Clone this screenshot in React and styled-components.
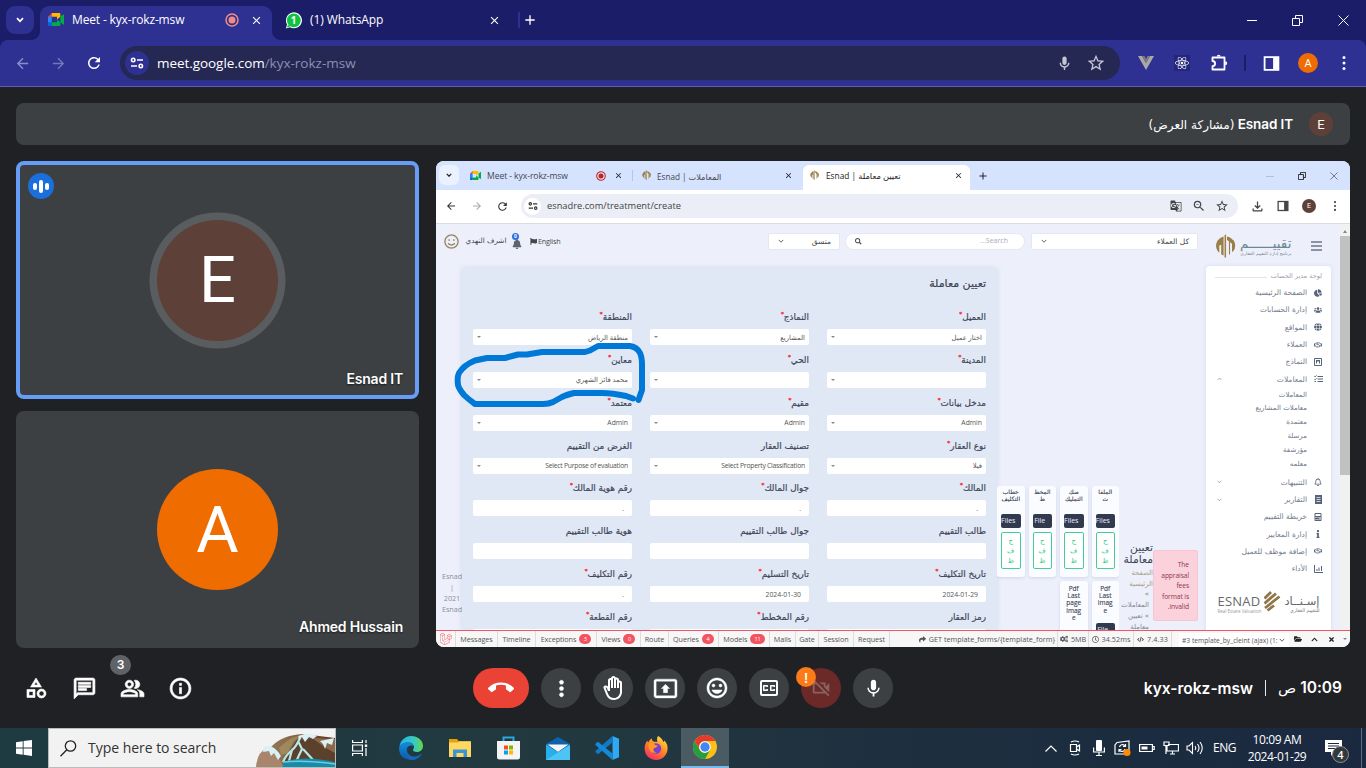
import React from "react";
import styled, { createGlobalStyle } from "styled-components";
import {
  MdCallEnd, MdMoreVert, MdOutlineBackHand, MdOutlinePresentToAll, MdOutlineMood, MdOutlineClosedCaptionOff,
  MdOutlineVideocamOff, MdMic, MdOutlineInfo, MdOutlineCategory, MdOutlineChat, MdOutlinePeopleAlt,
  MdOutlineMic, MdStarOutline, MdArrowBack, MdArrowForward, MdRefresh, MdClose, MdAdd,
  MdGTranslate, MdZoomOut, MdOutlineFileDownload,
} from "react-icons/md";
import {
  FaReact, FaBell, FaFlag, FaSearch, FaChartPie, FaUsers, FaGlobe, FaListUl, FaCalculator, FaInfo,
  FaRegBell, FaShare, FaCogs, FaRegClock, FaCode, FaFolderOpen, FaChevronUp, FaTimes, FaRegHandshake,
  FaRegSmile, FaLaravel,
} from "react-icons/fa";

const Global = createGlobalStyle`
  * { box-sizing: border-box; }
  body { margin: 0; background: #202124; font-family: "Open Sans", "DejaVu Sans", sans-serif; overflow: hidden; }
  svg { display: block; flex: none; }
`;

const Screen = styled.div`
  width: 1366px; height: 768px; display: flex; flex-direction: column; overflow: hidden; background: #202124;
`;
const Slot = styled.div`
  width: ${p => p.$w}px; flex: none; display: flex; align-items: center;
  justify-content: ${p => p.$j || "center"}; height: 100%; padding-top: ${p => p.$pt || 0}px;
`;
const Text = styled.span`
  font-size: ${p => p.$s || 12}px; color: ${p => p.$c || "inherit"}; font-weight: ${p => p.$b || 400};
  letter-spacing: ${p => p.$ls || 0}px; white-space: nowrap; line-height: 1.2;
  font-family: ${p => p.$f || "inherit"}; ${p => p.$rtl && "direction: rtl;"}
`;
const Divider = styled.i`
  width: ${p => p.$w || 1}px; height: ${p => p.$h}px; background: ${p => p.$c}; flex: none;
`;
const Spacer = styled.div`flex: 1;`;

/* ---------- browser window ---------- */
const TabStrip = styled.div`
  height: 40px; display: flex; background: #1b1d69; color: #fff; flex: none;
`;
const TabMenu = styled.div`
  width: 28px; height: 28px; margin: 6px 6px 6px 6px; border-radius: 9px; background: #2e3192;
  display: flex; align-items: center; justify-content: center;
`;
const ActiveTab = styled.div`
  width: 232px; height: 34px; margin-top: 6px; display: flex; background: #2e3192; border-radius: 9px 9px 0 0;
  padding-bottom: 6px; position: relative;
  &::before, &::after {
    content: ""; position: absolute; bottom: 0; width: 8px; height: 8px;
  }
  &::before { left: -8px; background: radial-gradient(circle at 0 0, transparent 7.500px, #2e3192 8px); }
  &::after { right: -8px; background: radial-gradient(circle at 100% 0, transparent 7.500px, #2e3192 8px); }
`;
const IdleTab = styled.div`
  width: 246px; height: 40px; display: flex;
`;
const ToolbarShell = styled.div`background: #1b1d69; flex: none;`;
const Toolbar = styled.div`
  height: 47px; display: flex; align-items: center; background: #2e3192; color: #fff; flex: none;
  border-bottom: 1px solid #5d60b5; border-radius: 8px 8px 0 0;
`;
const Omnibox = styled.div`
  width: 1000px; height: 34px; border-radius: 17px; background: #252853; display: flex; align-items: center; flex: none;
`;
const SiteInfo = styled.div`
  width: ${p => p.$d}px; height: ${p => p.$d}px; border-radius: 50%; background: ${p => p.$bg}; margin-left: ${p => p.$m}px;
  display: flex; align-items: center; justify-content: center; flex: none;
`;
const Round = styled.div`
  width: ${p => p.$d}px; height: ${p => p.$d}px; border-radius: 50%; background: ${p => p.$bg}; color: #fff;
  display: flex; align-items: center; justify-content: center; font: ${p => p.$b || 400} ${p => p.$s}px Roboto, sans-serif; flex: none;
  ${p => p.$ring && `box-shadow: 0 0 0 ${p.$ring}px #5a5d60;`}
`;

const MeetLogo = ({ w = 16 }) => (
  <svg width={w} height={w * 0.82} viewBox="0 0 88 72">
    <path d="M0 51v15c0 3.500 2.700 6 6 6h15l3.200-11.300L21 51l-10.300-3.200z" fill="#0066da" />
    <path d="M21 0 0 21l10.800 3.200L21 21l3-10z" fill="#e94235" />
    <path d="M0 21h21v30H0z" fill="#2684fc" />
    <path d="M83 8.500 68 21v30l15 12.300c2 1.700 5 .2 5-2.400V11c0-2.700-3-4.200-5-2.500z" fill="#00ac47" />
    <path d="M49.500 36v15H21v21h41c3.500 0 6-2.600 6-6V51z" fill="#00ac47" />
    <path d="M62 0H21v21h28.500v15L68 21V6c0-3.400-2.500-6-6-6z" fill="#ffba00" />
  </svg>
);
const Record = ({ s, c }) => (
  <svg width={s} height={s} viewBox="0 0 14 14" fill="none" stroke={c} strokeWidth="1.500">
    <circle cx="7" cy="7" r="6" /><circle cx="7" cy="7" r="3.500" fill={c} stroke="none" />
  </svg>
);
const Chevron = ({ w = 8, sw = 1.8, up, c = "currentColor" }) => (
  <svg width={w} height={w * 0.75} viewBox="0 0 8 6" fill="none" stroke={c} strokeWidth={sw}>
    <path d={up ? "M1 4.800 4 1.700 7 4.800" : "M1 1.200 4 4.300 7 1.200"} />
  </svg>
);
const Tune = ({ s = 14, c = "currentColor" }) => (
  <svg width={s} height={s} viewBox="0 0 14 14" fill="none" stroke={c} strokeWidth="1.600">
    <circle cx="3.200" cy="4" r="1.700" /><path d="M7 4h6M1 10h6" /><circle cx="10.800" cy="10" r="1.700" />
  </svg>
);
const WhatsApp = () => (
  <svg width="17" height="17" viewBox="0 0 17 17">
    <path d="M1 16.500 2 12.300A8 8 0 1 1 5 15.300z" fill="#fff" />
    <circle cx="8.800" cy="8.300" r="6.900" fill="#10c143" /><path d="M2 15.500l.9-3 2.200 2.100z" fill="#10c143" />
    <text x="8.600" y="12" fontSize="10" fontWeight="700" fill="#fff" textAnchor="middle" fontFamily="Open Sans">1</text>
  </svg>
);
const Puzzle = () => (
  <svg width="18" height="18" viewBox="0 0 18 18" fill="none" stroke="#fff" strokeWidth="1.800" strokeLinejoin="round">
    <path d="M2.500 3.500H14.500V15.500H2.500V12.200A2.600 2.600 0 0 0 2.500 7z" />
    <path d="M6.800 2.600a1.900 1.900 0 0 1 3.800 0zM15.200 7.200a2 2 0 0 1 0 4z" fill="#fff" stroke="none" />
  </svg>
);
const SidePanel = ({ s, c }) => (
  <svg width={s} height={s} viewBox="0 0 16 16">
    <rect x="1.500" y="2" width="13" height="12" fill="none" stroke={c} strokeWidth="1.700" /><path d="M9.500 2h5v12h-5z" fill={c} />
  </svg>
);
const WinButton = ({ kind, s = 11, c = "#fff", sw = 1 }) => (
  <svg width={s} height={s} viewBox="0 0 11 11" fill="none" stroke={c} strokeWidth={sw}>
    {kind === "min" && <path d="M0.500 5.500h10" shapeRendering="crispEdges" />}
    {kind === "max" && <path d="M.5 3.500h7v7h-7zM3.500 3V.5h7v7H8" />}
    {kind === "close" && <path d="M.5.5l10 10M10.500.5l-10 10" />}
  </svg>
);
const Kebab = ({ c, h = 14, r = 1.500 }) => (
  <svg width="4" height={h} viewBox={`0 0 4 ${h}`} fill={c}>
    <circle cx="2" cy={r} r={r} /><circle cx="2" cy={h / 2} r={r} /><circle cx="2" cy={h - r} r={r} />
  </svg>
);

const Browser = () => (
  <>
    <TabStrip>
      <TabMenu><Chevron /></TabMenu>
      <ActiveTab>
        <Slot $w={32}><MeetLogo /></Slot>
        <Slot $w={147} $j="flex-start" $pt={1}><Text $s={12} $ls={-0.15}>Meet - kyx-rokz-msw</Text></Slot>
        <Slot $w={26}><Record s={14} c="#f28b82" /></Slot>
        <Slot $w={22}><MdClose size={13} /></Slot>
      </ActiveTab>
      <IdleTab>
        <Slot $w={5} />
        <Slot $w={33}><WhatsApp /></Slot>
        <Slot $w={173} $j="flex-start" $pt={1}><Text $s={12} $ls={-0.1}>(1) WhatsApp</Text></Slot>
        <Slot $w={22}><MdClose size={13} /></Slot>
      </IdleTab>
      <Slot $w={2}><Divider $w={2} $h={16} $c="#2e3192" /></Slot>
      <Slot $w={20}><MdAdd size={16} /></Slot>
      <Spacer />
      <Slot $w={46}><WinButton kind="min" /></Slot>
      <Slot $w={46}><WinButton kind="max" /></Slot>
      <Slot $w={46}><WinButton kind="close" /></Slot>
    </TabStrip>
    <ToolbarShell>
      <Toolbar>
        <Slot $w={4} />
        <Slot $w={36}><MdArrowBack size={17} color="#8b8dca" /></Slot>
        <Slot $w={36}><MdArrowForward size={17} color="#7577bb" /></Slot>
        <Slot $w={36}><MdRefresh size={18} /></Slot>
        <Slot $w={8} />
        <Omnibox>
          <SiteInfo $d={24} $bg="#2e3192" $m={5}><Tune /></SiteInfo>
          <Slot $w={8} />
          <Text $s={13.500} $ls={-0.060}>meet.google.com<Text $s={13.500} $c="#8d8fb0">/kyx-rokz-msw</Text></Text>
          <Spacer />
          <Slot $w={32}><MdOutlineMic size={17} color="#c4c5d4" /></Slot>
          <Slot $w={32}><MdStarOutline size={20} color="#c4c5d4" /></Slot>
          <Slot $w={8} />
        </Omnibox>
        <Slot $w={8} />
        <Slot $w={36}>
          <svg width="16" height="14" viewBox="0 0 16 14"><path d="M0 0h4l4 7 4-7h4L8 14z" fill="#a9a9a9" /><path d="M4 0h2.500L8 3l1.500-3H12L8 7.200z" fill="#7c7c80" /></svg>
        </Slot>
        <Slot $w={36}><ReactBox><FaReact size={14} /></ReactBox></Slot>
        <Slot $w={37}><Puzzle /></Slot>
        <Slot $w={16}><Divider $w={2} $h={16} $c="#1b1d69" /></Slot>
        <Slot $w={37}><SidePanel s={17} c="#fff" /></Slot>
        <Slot $w={36}><Round $d={20} $bg="#ef6c00" $s={11}>A</Round></Slot>
        <Slot $w={36}><Kebab c="#fff" /></Slot>
      </Toolbar>
    </ToolbarShell>
  </>
);
const ReactBox = styled.div`
  width: 16px; height: 16px; background: #23267a; display: flex; align-items: center; justify-content: center;
`;

/* ---------- meeting ---------- */
const meetFont = 'Inter, "DejaVu Sans", sans-serif';
const Meeting = styled.main`
  height: 561px; padding: 16px 16px 0; flex: none; display: flex; flex-direction: column; gap: 16px; color: #fff;
`;
const PresenterBar = styled.div`
  height: 42px; flex: none; border-radius: 8px; background: #3c4043; display: flex; align-items: center;
  justify-content: flex-end; gap: 16px; padding-right: 17px;
`;
const Stage = styled.div`display: flex; gap: 17px; height: 487px;`;
const People = styled.div`width: 403px; display: flex; flex-direction: column; gap: 12px;`;
const Tile = styled.div`
  height: ${p => (p.$active ? 238 : 237)}px; background: #3c4043; border-radius: 8px; position: relative; display: flex;
  align-items: center; justify-content: center; ${p => p.$active && "border: 4px solid #669df6;"}
`;
const TileName = styled.div`
  position: absolute; right: ${p => p.$r}px; bottom: ${p => p.$bt}px; font: ${"600 14px"} ${meetFont}; line-height: 18px;
  letter-spacing: -.2px; text-shadow: 0 1px 2px rgba(0,0,0,.6);
`;
const Speaking = styled.div`
  position: absolute; left: 8px; top: 8px; width: 26px; height: 26px; border-radius: 50%; background: #1a6fdc;
  display: flex; align-items: center; justify-content: center; gap: 2px;
`;
const Wave = styled.i`width: 4px; height: ${p => p.$h}px; border-radius: 2px; background: #fff;`;

/* ---------- shared page ---------- */
const Shared = styled.section`
  width: 914px; height: 486px; background: #fff; border-radius: 8px; overflow: hidden; position: relative;
  color: #44474c; display: flex; flex-direction: column;
`;
const STabs = styled.div`height: 29px; background: #d5e3ff; display: flex; flex: none;`;
const STabMenu = styled.div`
  width: 20px; height: 20px; border-radius: 6px; background: #eaf1ff; margin: 4px; margin-left: 3px; color: #222;
  display: flex; align-items: center; justify-content: center;
`;
const SActive = styled.div`
  width: 167px; height: 25px; margin-top: 4px; background: #fff; border-radius: 6px 6px 0 0; display: flex; padding-bottom: 4px;
`;
const SToolbar = styled.div`
  height: 34px; display: flex; align-items: center; background: #fff; border-bottom: 1px solid #dcdcdc; flex: none;
  color: #444; padding-bottom: 1px;
`;
const SOmni = styled.div`
  width: 717px; height: 24px; background: #ebeef7; border-radius: 12px; display: flex; align-items: center;
`;
const Page = styled.div`
  height: 406px; display: flex; background: #edf0fb; flex: none;
`;
const PageMain = styled.div`width: 904px; height: 406px; overflow: hidden;`;
const Scrollbar = styled.div`
  width: 10px; background: #f1f1f1; display: flex; flex-direction: column; align-items: center; padding-top: 6px; gap: 3px;
`;
const ScrollUp = styled.i`
  width: 0; height: 0; border: 2px solid transparent; border-bottom: 3px solid #888; border-top: 0;
`;
const ScrollThumb = styled.div`width: 10px; height: 239px; background: #c1c1c1;`;
const PageHead = styled.header`height: 44px; display: flex; align-items: center; padding-bottom: 9px;`;
const Select = styled.div`
  width: ${p => p.$w}px; height: 17px; background: #fff; border: 1px solid #e4e7f0; border-radius: ${p => p.$r || 2}px;
  display: flex; align-items: center; justify-content: space-between; padding: 0 ${p => p.$pr || 8}px 0 9px; flex: none;
`;
const Bell = styled.div`width: 12px; height: 14px; position: relative; display: flex; align-items: flex-end;`;
const BellCount = styled.b`
  position: absolute; left: 0; top: -2px; width: 7px; height: 7px; border-radius: 50%; background: #2b72dc; color: #fff;
  font-size: 5px; line-height: 7px; text-align: center;
`;
const Logo = styled.div`display: flex; gap: 4px; align-items: center; width: 78px; padding-top: 9px; white-space: nowrap; flex: none;`;
const Menu = styled.div`
  display: flex; flex-direction: column; gap: 2px; padding-top: 8px;
`;
const MenuBar = styled.i`width: 11px; height: 2px; background: #8a94a4;`;
const Content = styled.div`display: flex; height: 362px; align-items: flex-start;`;
const FootNote = styled.div`
  width: 26px; padding: 303px 0 0 6px; font-size: 7.200px; line-height: 11px; color: #878e9c; text-align: center; white-space: nowrap;
  display: flex; flex-direction: column; align-items: center; flex: none;
`;
const Card = styled.div`
  width: 535px; height: 363px; background: #e1e8f5; padding: 8px 11px 0; direction: rtl; flex: none;
  box-shadow: 0 0 5px rgba(120,140,190,.22);
`;
const CardTitle = styled.h1`
  margin: 0; height: 34px; font: 400 11px/16px "DejaVu Sans"; color: #3c4356; -webkit-text-stroke: .2px;
`;
const FormGrid = styled.div`
  display: grid; grid-template-columns: repeat(3, 159px); column-gap: 18px; grid-auto-rows: 42.86px;
`;
const FieldLabel = styled.div`
  height: 19px; line-height: 15px; font-family: "DejaVu Sans"; font-size: 8.800px; color: #3f4759; white-space: nowrap;
  -webkit-text-stroke: .2px;
`;
const Star = styled.sup`color: #f22; font-size: 5.500px; line-height: 0; font-weight: 700; vertical-align: 4px;`;
const Input = styled.div`
  height: 16px; background: #fff; border-radius: 2px; display: flex; align-items: center; justify-content: space-between;
  padding: 0 ${p => p.$in || 4}px 0 4px; font-size: 6.800px; color: #555; font-family: "Open Sans", "DejaVu Sans";
  white-space: nowrap; letter-spacing: ${p => (p.$tight ? -0.250 : 0)}px;
`;
const Caret = styled.i`
  border: 2px solid transparent; border-top: 2px solid #888; border-bottom: 0; width: 0; height: 0;
`;

const fields = [
  ["العميل", 1, "اختار عميل", 1], ["النماذج", 1, "المشاريع", 1], ["المنطقة", 1, "منطقة الرياض", 1],
  ["المدينة", 1, "", 1], ["الحي", 1, "", 1], ["معاين", 1, "محمد فائز الشهري", 1],
  ["مدخل بيانات", 1, "Admin", 1], ["مقيم", 1, "Admin", 1], ["معتمد", 1, "Admin", 1],
  ["نوع العقار", 1, "فيلا", 1], ["تصنيف العقار", 0, "Select Property Classification", 1], ["الغرض من التقييم", 0, "Select Purpose of evaluation", 1],
  ["المالك", 1, ".", 0], ["جوال المالك", 1, ".", 0], ["رقم هوية المالك", 1, ".", 0],
  ["طالب التقييم", 0, "", 0], ["جوال طالب التقييم", 0, "", 0], ["هوية طالب التقييم", 0, "", 0],
  ["تاريخ التكليف", 1, "2024-01-29", 0], ["تاريخ التسليم", 1, "2024-01-30", 0], ["رقم التكليف", 1, ".", 0],
  ["رمز العقار", 0, "", 0], ["رقم المخطط", 1, "", 0], ["رقم القطعة", 1, "", 0],
];

const Uploads = styled.div`
  width: 122px; margin-top: 218px; direction: rtl; display: grid; grid-template-columns: repeat(4, 27.500px);
  column-gap: 4px; row-gap: 4px; height: 144px; overflow: hidden; flex: none;
`;
const UpCard = styled.div`
  background: #fbfcff; border-radius: 3px; height: 91px; padding: 3px 4px; text-align: center; overflow: hidden;
  box-shadow: 0 1px 3px rgba(90,110,160,.2);
`;
const UpTitle = styled.div`
  height: ${p => p.$h || 25}px; font: ${p => (p.$h ? 6.500 : 6)}px/7.200px "Open Sans", "DejaVu Sans"; color: #333b4d; white-space: pre-line;
  margin: 0 -3px; padding-top: ${p => (p.$h ? 1 : 0)}px; -webkit-text-stroke: .1px;
`;
const UpFile = styled.div`
  height: 14px; background: #313a4e; border-radius: 2px; color: #eef; font-size: 7px; line-height: 14px; overflow: hidden;
  direction: ltr; display: flex; justify-content: center; white-space: nowrap; padding-right: 5px;
`;
const UpSave = styled.div`
  margin-top: 4px; height: 37px; border: 1px solid #45cd96; border-radius: 2px; color: #37c98a;
  font: 7px/10px "DejaVu Sans"; padding-top: 3px; background: #fff;
`;
const Crumbs = styled.div`
  width: 34px; margin-top: 274px; height: 88px; overflow: hidden; direction: rtl; font: 6.900px/10.700px "DejaVu Sans"; color: #808894; flex: none;
`;
const CrumbTitle = styled.div`font-size: 10.800px; line-height: 12px; color: #3c4356; padding-bottom: 2px; white-space: pre-line;`;
const CrumbLine = styled.div`white-space: nowrap; padding-right: ${p => p.$p || 0}px; color: ${p => p.$c || "inherit"};`;
const Alert = styled.div`
  width: 45px; height: 71px; margin: 282px 8px 0 0; background: #fbd1dc; border: 1px solid #f8c6d2; border-radius: 2px;
  color: #8a3a4f; font-size: 6.700px; letter-spacing: -.1px; line-height: 10.500px; text-align: right; padding: 9px 8px 0 0; white-space: pre-line; flex: none;
`;
const Sidebar = styled.aside`
  width: 125px; height: 370px; margin-top: -2px; background: #fff; border-radius: 4px 4px 0 0; padding-top: 4px;
  box-shadow: 0 0 4px rgba(120,140,190,.2); color: #6c7686; flex: none;
`;
const SideHead = styled.div`
  height: 14px; display: flex; align-items: center; justify-content: space-between; padding: 0 9px; color: #9aa1ae;
`;
const SideItem = styled.div`
  height: ${p => (p.$sub ? 13.800 : 17.300)}px; margin-top: ${p => p.$mt || 0}px; display: flex; align-items: center; direction: rtl; padding: 0 6px 0 11px;
  font: ${p => (p.$sub ? 7 : 7.500)}px "DejaVu Sans"; color: ${p => (p.$sub ? "#6f7989" : "#727c8c")}; white-space: nowrap;
`;
const SideIcon = styled.div`width: 14px; margin-left: 4px; display: flex; justify-content: center; color: #56637a;`;
const EsnadBrand = styled.div`display: flex; align-items: center; justify-content: center; gap: 3px; margin-top: 8px; height: 34px;`;
const BrandCol = styled.div`
  display: flex; flex-direction: column; align-items: ${p => p.$a || "flex-start"}; padding-top: ${p => p.$pt || 0}px;
`;

const Tower = ({ s }) => (
  <svg width={s} height={s * 1.15} viewBox="0 0 22 25" fill="#9a8048">
    <path d="M9 2.500v19.800A10.200 10.200 0 0 1 6.500 21V11L4.500 12v7.500A10 10 0 0 1 9 2.500z" />
    <path d="M10 1.200 11.600 0v24.500H10zM12.600 2.400A10 10 0 0 1 17.800 19.300V10l-2-1.400v12.200l-1.200.7V7.500l-2-1.400z" />
    <path d="M18.900 5.500a10 10 0 0 1 0 12.800zM3.500 6a10 10 0 0 0 0 12.500z" />
  </svg>
);
const ChartIcon = () => (
  <svg width="9" height="8" viewBox="0 0 9 8" fill="none" stroke="currentColor"><path d="M.5 0v7.500H9M3 6V4M5 6V2.500M7.500 6V1" /></svg>
);
const FormIcon = () => (
  <svg width="8" height="8" viewBox="0 0 8 8" fill="none" stroke="currentColor"><path d="M.5.5h7v7h-7zM2 2.500h4M2.500 3v2.500M5.500 3v2.500M4 3v1" /></svg>
);
const ReportIcon = () => (
  <svg width="7" height="9" viewBox="0 0 7 9"><path d="M0 0h7v9H0z" fill="currentColor" /><path d="M1.500 2.500h4M1.500 4.500h4M1.500 6.500h4" stroke="#fff" strokeWidth=".7" /></svg>
);
const ChecksIcon = () => (
  <svg width="9" height="8" viewBox="0 0 9 8" fill="none" stroke="currentColor"><path d="M3.500 1.500H9M3.500 4H9M3.500 6.500H9M.3 1l.8.8L2.500.4M.3 4l.8.8 1.400-1.400M.5 6.500h1.500" /></svg>
);

const side = [
  ["الصفحة الرئيسية", FaChartPie], ["إدارة الحسابات", FaUsers], ["المواقع", FaGlobe], ["العملاء", FaRegHandshake],
  ["النماذج", FormIcon], ["المعاملات", ChecksIcon, "up"],
];
const sub = ["المعاملات", "معاملات المشاريع", "معتمدة", "مرسلة", "مؤرشفة", "معلمه"];
const side2 = [
  ["التنبيهات", FaRegBell, "down"], ["التقارير", ReportIcon, "down"], ["خريطة التقييم", FaCalculator],
  ["إدارة المعايير", FaInfo], ["إضافة موظف للعميل", FaRegHandshake], ["الأداء", ChartIcon],
];
const SideRow = ([t, I, ch], mt) => (
  <SideItem key={t} $mt={mt}>
    <SideIcon><I size={8} /></SideIcon>{t}<Spacer />{ch && <Chevron w={5} sw={1} up={ch === "up"} />}
  </SideItem>
);

const DebugBar = styled.footer`
  height: 17px; display: flex; align-items: flex-start; border-top: 1px solid #f4545f; background: #f7f7f7; color: #555;
  flex: none; width: 914px;
`;
const DItem = styled.div`
  width: ${p => p.$w}px; height: 16px; border-right: 1px solid #ddd; display: flex; align-items: center; justify-content: center;
  gap: 3px; font-size: 7.200px; white-space: nowrap; flex: none; letter-spacing: ${p => p.$ls || -0.050}px;
`;
const DBadge = styled.b`
  min-width: 12px; height: 10px; padding: 0 4px; border-radius: 5px; background: #f4545f; color: #fff; font-size: 5.500px; line-height: 10px;
  text-align: center; font-weight: 400;
`;
const debug = [["Messages", 42], ["Timeline", 38], ["Exceptions", 61, "3"], ["Views", 44, "0"], ["Route", 28], ["Queries", 50, "4"],
  ["Models", 51, "11"], ["Mails", 26], ["Gate", 23], ["Session", 35], ["Request", 36]];
const DSelect = styled.div`
  width: 110px; height: 14px; margin-top: 2px; background: #fff; display: flex; align-items: center; justify-content: space-between; padding: 1px 4px 0 3px;
  font-size: 6.700px; margin-left: 7px; white-space: nowrap; flex: none;
`;
const DTool = styled.div`width: ${p => p.$w}px; height: 16px; display: flex; align-items: center; justify-content: center; flex: none;`;
const Scribble = styled.svg`position: absolute; left: 0; top: 0; pointer-events: none;`;

const up = (t, f, h) => (
  <UpCard key={t}><UpTitle $h={h}>{t}</UpTitle>{f && <UpFile>{f}</UpFile>}{!h && <UpSave>ح<br />ف<br />ظ</UpSave>}</UpCard>
);

const SharedScreen = () => (
  <Shared>
    <STabs>
      <STabMenu><Chevron w={6} sw={1.600} /></STabMenu>
      <Slot $w={24}><MeetLogo w={11} /></Slot>
      <Slot $w={106} $j="flex-start" $pt={2}><Text $s={8.600} $ls={-0.080}>Meet - kyx-rokz-msw</Text></Slot>
      <Slot $w={16}><Record s={10} c="#c5221f" /></Slot>
      <Slot $w={18}><MdClose size={9} color="#222" /></Slot>
      <Slot $w={10}><Divider $h={11} $c="#a8c7fa" /></Slot>
      <Slot $w={18}><Tower s={9} /></Slot>
      <Slot $w={125} $j="flex-start" $pt={2}><Text $s={8.200} $ls={-0.050}>&nbsp;Esnad | المعاملات</Text></Slot>
      <Slot $w={16}><MdClose size={9} color="#222" /></Slot>
      <Slot $w={7} />
      <SActive>
        <Slot $w={23}><Tower s={9} /></Slot>
        <Slot $w={123} $j="flex-start" $pt={1}><Text $s={8.300} $c="#222">Esnad | تعيين معاملة</Text></Slot>
        <Slot $w={18}><MdClose size={9} color="#222" /></Slot>
      </SActive>
      <Slot $w={26}><MdAdd size={12} color="#222" /></Slot>
      <Spacer />
      <Slot $w={32}><WinButton kind="min" s={8} c="#a9b4c8" /></Slot>
      <Slot $w={32}><WinButton kind="max" s={8} c="#222" sw={1.300} /></Slot>
      <Slot $w={32}><WinButton kind="close" s={8} c="#777" sw={1.300} /></Slot>
    </STabs>
    <SToolbar>
      <Slot $w={2} />
      <Slot $w={26}><MdArrowBack size={12} color="#333" /></Slot>
      <Slot $w={25}><MdArrowForward size={12} color="#aaa" /></Slot>
      <Slot $w={27}><MdRefresh size={13} color="#333" /></Slot>
      <Slot $w={5} />
      <SOmni>
        <SiteInfo $d={17} $bg="#fff" $m={3}><Tune s={10} c="#333" /></SiteInfo>
        <Slot $w={6} />
        <Text $s={9.300} $ls={0}>esnadre.com/treatment/create</Text>
        <Spacer />
        <Slot $w={23}><MdGTranslate size={12} /></Slot>
        <Slot $w={23}><MdZoomOut size={14} /></Slot>
        <Slot $w={23}><MdStarOutline size={14} /></Slot>
        <Slot $w={5} />
      </SOmni>
      <Slot $w={6} />
      <Slot $w={26}><MdOutlineFileDownload size={15} /></Slot>
      <Slot $w={26}><SidePanel s={12} c="#444" /></Slot>
      <Slot $w={26}><Round $d={14} $bg="#5d4037" $s={7}>E</Round></Slot>
      <Slot $w={25}><Kebab c="#444" h={10} r={1.100} /></Slot>
    </SToolbar>
    <Page>
      <PageMain>
        <PageHead>
          <Slot $w={8} /><FaRegSmile size={15} color="#9a8a66" />
          <Slot $w={6} /><Slot $w={42}><Text $s={7.200} $rtl $f="DejaVu Sans">اشرف النهدي</Text></Slot>
          <Slot $w={5} />
          <Bell><FaBell size={10} color="#5f6470" /><BellCount>0</BellCount></Bell>
          <Slot $w={6} /><FaFlag size={7} /><Slot $w={1} /><Text $s={7.200} $ls={-0.200}>English</Text>
          <Spacer />
          <Select $w={72}><Chevron w={6} sw={1.100} /><Text $s={7.500} $f="DejaVu Sans">منسق</Text></Select>
          <Slot $w={5} />
          <Select $w={180} $r={9} $pr={16}><FaSearch size={6.500} color="#445" /><Text $s={7} $c="#a8adb8">...Search</Text></Select>
          <Slot $w={6} />
          <Select $w={167}><Chevron w={6} sw={1.100} /><Text $s={7.500} $f="DejaVu Sans">كل العملاء</Text></Select>
          <Slot $w={17} />
          <Logo>
            <Tower s={21} />
            <BrandCol $a="flex-end">
              <Text $s={13.500} $f="DejaVu Sans" $c="#6c8595" $rtl>تقييــــــم</Text>
              <Text $s={4.500} $f="DejaVu Sans" $c="#7b8994" $rtl>برنامج إدارة التقييم العقاري</Text>
            </BrandCol>
          </Logo>
          <Slot $w={18} />
          <Menu><MenuBar /><MenuBar /><MenuBar /></Menu>
          <Slot $w={18} />
        </PageHead>
        <Content>
          <FootNote><span>Esnad</span><span>|</span><span>2021</span><span>Esnad</span></FootNote>
          <Card>
            <CardTitle>تعيين معاملة</CardTitle>
            <FormGrid>
              {fields.map(([l, req, v, dd]) => (
                <div key={l}>
                  <FieldLabel>{l}{req ? <Star>*</Star> : null}</FieldLabel>
                  <Input $in={dd ? 4 : 8} $tight={v.length > 20}><span>{v}</span>{dd ? <Caret /> : null}</Input>
                </div>
              ))}
            </FormGrid>
          </Card>
          <Uploads>
            {up("الملفا\nت", "Files")}{up("صك\nالتمليك", "Files")}{up("المخط\nط", "File")}{up("خطاب\nالتكليف", "Files")}
            {up("Pdf\nLast\nimag\ne", "File", 39)}{up("Pdf\nLast\npage\nimag\ne", "", 46)}
          </Uploads>
          <Crumbs>
            <CrumbTitle>{"تعيين\nمعاملة"}</CrumbTitle>
            <CrumbLine $c="#a49a86">الصفحة</CrumbLine><CrumbLine $c="#a49a86">الرئيسية</CrumbLine>
            <CrumbLine $p={4}>»</CrumbLine><CrumbLine $p={4}>المعاملات</CrumbLine>
            <CrumbLine $p={4}>» تعيين</CrumbLine><CrumbLine $p={4}>معاملة</CrumbLine>
          </Crumbs>
          <Alert>{"The\nappraisal\nfees\nformat is\n.invalid"}</Alert>
          <Sidebar>
            <SideHead><Divider $w={52} $h={1} $c="#e2e4ea" /><Text $s={6.500} $f="DejaVu Sans" $rtl>لوحة مدير الحساب</Text></SideHead>
            {side.map(r => SideRow(r, 0))}
            {sub.map((t, i) => <SideItem key={t + i} $sub><SideIcon />{t}</SideItem>)}
            {side2.map((r, i) => SideRow(r, i === 0 ? 3 : 0))}
            <EsnadBrand>
              <BrandCol $pt={4}>
                <Text $s={13} $c="#66686c" $ls={0.200}>ESNAD</Text>
                <Text $s={4.500} $c="#999">Real Estate Valuation</Text>
              </BrandCol>
              <svg width="17" height="26" viewBox="0 0 17 26" stroke="#8f774a" strokeWidth="2.800" fill="none">
                <path d="M.5 9.500 7 3M.5 14.500 12 4.500M1 19 15.500 7.500M3.500 21.500 10 16.500" />
              </svg>
              <BrandCol $a="flex-end" $pt={4}>
                <Text $s={11.500} $f="DejaVu Sans" $c="#66686c" $rtl>إسـنــاد</Text>
                <Text $s={4.800} $f="DejaVu Sans" $c="#777" $rtl>للتقييم العقاري</Text>
              </BrandCol>
            </EsnadBrand>
          </Sidebar>
        </Content>
      </PageMain>
      <Scrollbar><ScrollUp /><ScrollThumb /></Scrollbar>
    </Page>
    <DebugBar>
      <DItem $w={20}><FaLaravel size={12} color="#f4545f" /></DItem>
      {debug.map(([t, w, b]) => <DItem key={t} $w={w}>{t}{b && <DBadge>{b}</DBadge>}</DItem>)}
      <Spacer />
      <DItem $w={141} $ls={0.020}><FaShare size={7} />GET template_forms/{"{template_form}"}</DItem>
      <DItem $w={31}><FaCogs size={8} />5MB</DItem>
      <DItem $w={45} $ls={0.050}><FaRegClock size={7} />34.52ms</DItem>
      <DItem $w={38} $ls={0.100}><FaCode size={7} />7.4.33</DItem>
      <DSelect>#3 template_by_cleint (ajax) (1:<Chevron w={6} sw={1.200} /></DSelect>
      <DTool $w={17}><FaFolderOpen size={8} color="#222" /></DTool>
      <DTool $w={17}><FaChevronUp size={7} color="#222" /></DTool>
      <DTool $w={17}><FaTimes size={7} color="#222" /></DTool>
      <DTool $w={10}><Caret /></DTool>
    </DebugBar>
    <Scribble width="914" height="486" viewBox="436 161 914 486">
      <path d="M633 398.500 626 396Q612 393 602 393H574Q566 395 562 397L553 402Q549 404 543 404H475Q468 399 464 395 459 389 458 385 457 377 459 373 464 365 475 360.500L487 358H505L518 354.500H527L542 352H585L590 350.500 598 346H630Q637 347 640 353 642 357 642 365V390L638.500 400"
        fill="none" stroke="#0078d7" strokeWidth="6" strokeLinecap="round" strokeLinejoin="round" />
    </Scribble>
  </Shared>
);

const Controls = styled.div`
  height: 80px; flex: none; display: flex; align-items: center; color: #fff;
`;
const Center = styled.div`display: flex; gap: 12px; margin-left: 269px;`;
const CtrlButton = styled.div`
  width: ${p => p.$w || 40}px; height: 40px; border-radius: 20px; background: ${p => p.$bg || "#3c4043"};
  color: ${p => p.$c || "#fff"}; display: flex; align-items: center; justify-content: center; position: relative;
  ${p => p.$heavy && `path:not([fill="none"]), circle { stroke: currentColor; stroke-width: ${p.$heavy}px; }`}
`;
const Warning = styled.div`
  position: absolute; left: -5px; top: -1px; width: 20px; height: 20px; border-radius: 50%; background: #fa7b17; color: #fff;
  font: 600 15px/20px "Open Sans"; text-align: center;
`;
const IconSlot = styled.div`
  width: 48px; height: 48px; display: flex; align-items: center; justify-content: center; position: relative;
  path:not([fill="none"]) { stroke: currentColor; stroke-width: .6px; }
`;
const Count = styled.div`
  position: absolute; left: 2px; top: -9px; width: 21px; height: 20px; border-radius: 10px; background: #5f6368; color: #fff;
  font: 600 12px/20px Inter; text-align: center;
`;
const MeetInfo = styled.div`
  margin-left: auto; display: flex; align-items: center; gap: 12px; padding-right: 24px; font: 600 15.500px ${meetFont};
`;

/* ---------- taskbar ---------- */
const Taskbar = styled.div`
  height: 40px; flex: none; display: flex; align-items: center; color: #fff;
  background: linear-gradient(90deg, #1e3b41 0%, #22383f 45%, #1e2f3f 65%, #1a2940 100%);
`;
const Search = styled.div`
  width: 288px; height: 40px; background: #f2f2f2; border: 1px solid #b9bcbd; color: #333; display: flex; align-items: center; overflow: hidden;
`;
const ChromeTile = styled.div`
  width: 48px; height: 40px; background: #4b5b64; border-bottom: 2px solid #76b9ed; display: flex; align-items: center; justify-content: center;
`;
const Clock = styled.div`
  width: 82px; text-align: center; font-size: 12px; line-height: 17.500px; letter-spacing: -.4px; flex: none;
`;
const Notify = styled.div`width: 30px; height: 40px; position: relative; display: flex; align-items: center; justify-content: center;`;
const NotifyCount = styled.b`
  position: absolute; left: 14px; top: 18px; width: 17px; height: 17px; border-radius: 50%; background: #33383d; border: 1px solid #8d9196;
  font: 600 11px/15px "Open Sans"; text-align: center;
`;

const WinterArt = () => (
  <svg width="79" height="38" viewBox="0 0 79 38">
    <defs><linearGradient id="rk" x1="0" x2="1"><stop offset="0" stopColor="#9b7d58" /><stop offset=".45" stopColor="#84694a" /><stop offset="1" stopColor="#59301f" /></linearGradient></defs>
    <path d="M2 38Q3 24 15 18 26 6 47 5L79 9V38z" fill="url(#rk)" />
    <path d="M0 38Q1 23 11 19 21 24 25 33L27 38z" fill="#a9856c" />
    <path d="M38 11 61 9 79 22V33H27Z" fill="#5b402c" />
    <path d="M56 9 79 10V24L70 19z" fill="#8a6a4b" />
    <path d="M44 9Q40 18 36 21 30 26 27 33M42 12 46 20Q43 26 40 33M47 20 59 33M36 21 33 32" stroke="#b5e8e7" strokeWidth="2.200" fill="none" />
    <path d="M27 33Q47 26 79 33V38H27z" fill="#168ca9" /><path d="M27 33Q50 31 79 35" stroke="#72cadb" strokeWidth="1.500" fill="none" />
    <path d="M8 18Q17 14 25 27L22 31 18 24 15 27 13 22 7 23zM42 7Q54 2 61 7L57 10 53 8 49 13 46 8 43 11zM64 12 78 9 76 16 71 14 69 20 67 15z" fill="#d9f0f5" />
    <path d="M23 19Q35 7 43 7L32 24 25 26z" fill="#b09a67" opacity=".6" />
  </svg>
);
const Windows = () => (
  <svg width="16" height="16" viewBox="0 0 16 16" fill="#fff"><path d="M0 2.200 6.700 1.200V7.500H0zM7.600 1.100 16 0v7.500H7.600zM0 8.400h6.700v6.300L0 13.800zM7.600 8.400H16V16l-8.400-1.200z" /></svg>
);
const TaskView = () => (
  <svg width="16" height="16" viewBox="0 0 16 16" fill="none" stroke="#fff" strokeWidth="1.200"><path d="M.6 0v2.500h9.800V0M.6 5h9.800v6H.600zM.6 16v-2.500h9.800V16M14 0v3M14 8v8" /><path d="M12.800 4.500h2.400v2.400h-2.400z" fill="#fff" stroke="none" /></svg>
);
const Edge = () => (
  <svg width="24" height="24" viewBox="0 0 24 24">
    <defs>
      <linearGradient id="e1" x1="0" x2="1"><stop offset="0" stopColor="#2ab3ee" /><stop offset=".6" stopColor="#36c9c3" /><stop offset="1" stopColor="#62d84a" /></linearGradient>
      <linearGradient id="e2" x1="0" y1="0" x2="0" y2="1"><stop offset="0" stopColor="#0f8ee0" /><stop offset="1" stopColor="#0c59a4" /></linearGradient>
    </defs>
    <path d="M.3 11C1.500 4 6.500 0 12 0c7 0 12 4.500 12 10 0 3.500-2.500 6-6 6-2.500 0-4-1-4-2s1-1.300 1-3c0-2.500-2.500-4.500-6-4.500C5 6.500 1.500 8.500.3 11z" fill="url(#e1)" />
    <path d="M0 12C1 8 5 6.300 9 6.500c3.500.2 6 2.300 6 4.500-.5-1-1.500-1.500-3-1.500-3 0-4.500 2.800-4.500 5.500 0 5 4 8.500 8 8.300C12 24.500 0 24.500 0 12z" fill="url(#e2)" />
    <path d="M8.300 12.500C7 17 11 21 16 20.500c2.500-.2 4.500-1.300 6-2.500.5-.3.900 0 .6.500C20.500 22 17 24 13 24 7 24 5 16 8.300 12.500z" fill="#1568b8" />
  </svg>
);
const Folder = () => (
  <svg width="22" height="18" viewBox="0 0 22 18"><path d="M0 0h8l2 2.500h11V6H0z" fill="#e5a00d" /><path d="M0 3.500h9l1-1.200h12V18H0z" fill="#ffd862" /><path d="M4 18v-7.500h14V18h-3.500v-4h-7v4z" fill="#3a94d8" /></svg>
);
const Store = () => (
  <svg width="23" height="24" viewBox="0 0 23 24"><path d="M6.500 6V1.500h10V6" fill="none" stroke="#29a8e0" strokeWidth="2" /><path d="M0 5h23v16a2.500 2.500 0 0 1-2.500 2.500h-18A2.500 2.500 0 0 1 0 21z" fill="#f4f4f4" /><path d="M7 9.500h4v4H7z" fill="#f25022" /><path d="M12 9.500h4v4h-4z" fill="#7fba00" /><path d="M7 14.500h4v4H7z" fill="#00a4ef" /><path d="M12 14.500h4v4h-4z" fill="#ffb900" /></svg>
);
const Mail = () => (
  <svg width="24" height="23" viewBox="0 0 24 23"><path d="M0 7 12 0l12 7v4H0z" fill="#0f62ad" /><path d="M1.500 7.500h21L12 15z" fill="#f5f5f5" /><path d="M0 7.500 12 15 24 7.500V23H0z" fill="#28aeea" /><path d="M0 23 24 8V23z" fill="#4cc4f6" /></svg>
);
const VsCode = () => (
  <svg width="24" height="24" viewBox="0 0 24 24"><path d="M17.500 0 24 2.800v18.400L17.500 24z" fill="#2faaf2" /><path d="M17.500 0v6.500L3 18.300.5 16.200V15z" fill="#0f7ac8" /><path d="M.5 7.500 3 5.700 17.500 17.500V24L.5 9z" fill="#1489d8" /></svg>
);
const Firefox = () => (
  <svg width="24" height="24" viewBox="0 0 24 24">
    <defs><linearGradient id="fx" x1=".8" y1="0" x2=".2" y2="1"><stop offset="0" stopColor="#ffe54a" /><stop offset=".45" stopColor="#ff8b20" /><stop offset="1" stopColor="#f5256d" /></linearGradient></defs>
    <path d="M14 0c4 2 5 5 5.500 6 .8-.5.8-1 .7-1.800C23 7 24 10 23.500 14 22.500 20 18 24 12 24 5.500 24 .6 19 .6 12.500c0-3 1-6 2.700-8 .2 1 .5 1.500 1 2C5 4.500 6.500 3 8 2.500 7.800 4 8.500 5 9.500 5.500c1 .5 3 0 4 .5C12.500 4 13 1.500 14 0z" fill="url(#fx)" />
    <circle cx="12" cy="12.500" r="5.200" fill="#7a3fd0" /><path d="M4.500 8c2-1.500 5-1 6.500.7 1 1 2.500.5 3 1-1 2-3.500 1.500-4.500 3-.7 1.500.5 3.500 3 3.500-4 2-8-1-8-8z" fill="#ff9a24" />
  </svg>
);
const Chrome = () => (
  <svg width="24" height="24" viewBox="0 0 24 24">
    <circle cx="12" cy="12" r="12" fill="#fbc116" /><path d="M1.600 6A12 12 0 0 1 22.400 6H12A6 6 0 0 0 6.800 15z" fill="#e33b2e" />
    <path d="M1.600 6 6.800 15A6 6 0 0 0 12 18l4.900-2.500L12 24A12 12 0 0 1 1.600 6z" fill="#269d43" />
    <circle cx="12" cy="12" r="5.800" fill="#fff" /><circle cx="12" cy="12" r="4.700" fill="#4285f4" />
  </svg>
);
const Line = ({ w = 16, h = 16, d, sw = 1.200, children }) => (
  <svg width={w} height={h} viewBox={`0 0 ${w} ${h}`} fill="none" stroke="#fff" strokeWidth={sw}><path d={d} />{children}</svg>
);

export default function App() {
  return (
    <>
      <Global />
      <Screen>
        <Browser />
        <Meeting>
          <PresenterBar>
            <Text $s={13.500} $b={600} $f={meetFont} $ls={-0.100} $rtl>Esnad IT <Text $s={12} $f="DejaVu Sans">(مشاركة العرض)</Text></Text>
            <Round $d={24} $bg="#5d4037" $s={13}>E</Round>
          </PresenterBar>
          <Stage>
            <People>
              <Tile $active>
                <Speaking><Wave $h={7} /><Wave $h={13} /><Wave $h={7} /></Speaking>
                <Round $d={121} $bg="#5d4037" $s={65} $ring={7.500}>E</Round>
                <TileName $r={12} $bt={7}>Esnad IT</TileName>
              </Tile>
              <Tile>
                <Round $d={121} $bg="#ef6c00" $s={65}>A</Round>
                <TileName $r={16} $bt={12}>Ahmed Hussain</TileName>
              </Tile>
            </People>
            <SharedScreen />
          </Stage>
        </Meeting>
        <Controls>
          <Slot $w={12} />
          <IconSlot><MdOutlineCategory size={24} /></IconSlot>
          <IconSlot><MdOutlineChat size={25} /></IconSlot>
          <IconSlot><MdOutlinePeopleAlt size={25} /><Count>3</Count></IconSlot>
          <IconSlot><MdOutlineInfo size={25} /></IconSlot>
          <Center>
            <CtrlButton $w={56} $bg="#ea4335"><MdCallEnd size={26} /></CtrlButton>
            <CtrlButton $heavy={0.400}><MdMoreVert size={25} /></CtrlButton>
            <CtrlButton><MdOutlineBackHand size={24} /></CtrlButton>
            <CtrlButton $heavy={0.400}><MdOutlinePresentToAll size={25} /></CtrlButton>
            <CtrlButton $heavy={0.500}><MdOutlineMood size={24} /></CtrlButton>
            <CtrlButton><MdOutlineClosedCaptionOff size={24} /></CtrlButton>
            <CtrlButton $bg="#6b2a27" $c="#8a6260"><MdOutlineVideocamOff size={22} /><Warning>!</Warning></CtrlButton>
            <CtrlButton><MdMic size={21} /></CtrlButton>
          </Center>
          <MeetInfo>
            <span>kyx-rokz-msw</span><Divider $h={16} $c="#e8eaed" />
            <Text $s={15.500} $b={600} $ls={-0.200} $rtl>10:09 <Text $s={15} $f="DejaVu Sans">ص</Text></Text>
          </MeetInfo>
        </Controls>
        <Taskbar>
          <Slot $w={48}><Windows /></Slot>
          <Search>
            <Slot $w={39}>
              <svg width="17" height="17" viewBox="0 0 17 17" fill="none" stroke="#222" strokeWidth="1.300"><circle cx="10.500" cy="6" r="5.200" /><path d="M6.800 9.800.5 16.300" /></svg>
            </Slot>
            <Text $s={14} $ls={-0.030} $c="#333">Type here to search</Text>
            <Spacer />
            <WinterArt />
          </Search>
          <Slot $w={48}><TaskView /></Slot>
          <Slot $w={3} />
          <Slot $w={48}><Edge /></Slot>
          <Slot $w={49}><Folder /></Slot>
          <Slot $w={49}><Store /></Slot>
          <Slot $w={49}><Mail /></Slot>
          <Slot $w={49}><VsCode /></Slot>
          <Slot $w={50}><Firefox /></Slot>
          <ChromeTile><Chrome /></ChromeTile>
          <Spacer />
          <Slot $w={24}><Line w={12} h={7} d="M.5 6.500 6 1l5.500 5.500" /></Slot>
          <Slot $w={24}><Line w={12} h={16} d="M1.500 4.500h6v7h-6zM7.500 7l3-2v6l-3-2M2 2Q6 0 10 2M2 14Q6 16 10 14" /></Slot>
          <Slot $w={23}><Line w={12} h={16} d="M.6 7.500v4.500h10.800V7.500M6 12v3.500M3 15.500h6"><rect x="3" y="0" width="6" height="11" rx="1" fill="#fff" stroke="none" /></Line></Slot>
          <Slot $w={25}><Line w={17} h={16} d="M3 2.500 15 1v13H1V5zM5.500 7a3 3 0 0 1 5-1.500l1 1M11.500 4v2.500H9M5 12V9.500h2.500M11 9a3 3 0 0 1-4.500 2L5 9.500"><circle cx="13" cy="12.500" r="3.500" fill="#ff8c00" stroke="none" /></Line></Slot>
          <Slot $w={24}><Line w={16} h={10} d="M.6 1.500h12.800v7H.600zM13.500 3.500h1.700v3h-1.700"><path d="M2.500 3.500h6v3h-6z" fill="#fff" stroke="none" /></Line></Slot>
          <Slot $w={23}><Line w={16} h={14} d="M5 3.500h10.500v6.500H4V5M1 1h5v3.500H1zM3 5v8M7 13h5M9.500 10v3" /></Slot>
          <Slot $w={24}><Line w={17} h={14} d="M1 5v4h2l3.500 3.500v-11L3 5zM9 5q1.500 2 0 4M11.500 3q3 4 0 8M14 1q4.500 6 0 12" sw={1.100} /></Slot>
          <Slot $w={30} $j="flex-end"><Text $s={12} $ls={-0.500}>ENG</Text></Slot>
          <Clock>10:09 AM<br />2024-01-29</Clock>
          <Notify>
            <svg width="17" height="16" viewBox="0 0 17 16"><path d="M0 0h17v12H9l-3 4v-4H0z" fill="#fff" /><path d="M3 3.500h11M3 6h11M3 8.500h8" stroke="#1a2940" /></svg>
            <NotifyCount>4</NotifyCount>
          </Notify>
          <Slot $w={13} />
          <Divider $h={40} $c="#606b7b" />
          <Slot $w={4} />
        </Taskbar>
      </Screen>
    </>
  );
}
